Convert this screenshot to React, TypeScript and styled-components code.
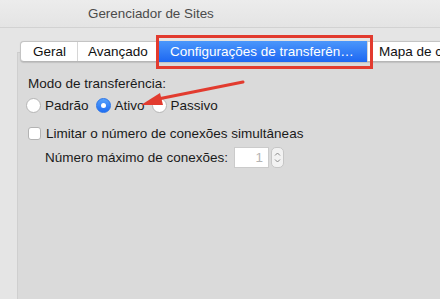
import React from 'react'
import styled, { createGlobalStyle } from 'styled-components'

const GlobalStyle = createGlobalStyle`
  html, body {
    margin: 0;
    padding: 0;
    background: #e5e5e5;
  }
  body {
    font-family: 'Liberation Sans', Arial, sans-serif;
    font-size: 13.5px;
    color: #1a1a1a;
  }
`

const Window = styled.div`
  position: relative;
  width: 440px;
  height: 299px;
  overflow: hidden;
  display: flex;
  flex-direction: column;
  background: #e5e5e5;
`

const TitleBar = styled.div`
  height: 27px;
  flex: none;
  display: flex;
  align-items: center;
  padding-left: 88px;
  background: linear-gradient(#ececec, #e4e4e4);
  border-bottom: 1px solid #d2d2d2;
`

const Title = styled.span`
  color: #4b4b4b;
  font-size: 13.4px;
  white-space: nowrap;
`

const Body = styled.div`
  flex: 1;
  display: flex;
  flex-direction: column;
  padding: 13px 0 0 17px;
`

const TabBar = styled.div`
  position: relative;
  z-index: 1;
  display: flex;
  height: 21px;
  margin: 0 0 -10px 3px;
  width: max-content;
  background: #fff;
  border: 1px solid #c4c4c4;
  border-bottom-color: #b6b6b6;
  border-radius: 4px;
  box-sizing: border-box;
  box-shadow: 0 0.5px 1px rgba(0, 0, 0, 0.12);
`

const Segment = styled.div<{ $width?: number; $pad: number; $selected?: boolean; $marked?: boolean }>`
  position: relative;
  flex: none;
  width: ${({ $width }) => ($width ? `${$width}px` : 'auto')};
  padding: 0 12px 0 ${({ $pad }) => $pad}px;
  display: flex;
  align-items: center;
  white-space: nowrap;
  color: ${({ $selected }) => ($selected ? '#fff' : '#111')};
  background: ${({ $selected }) => ($selected ? 'linear-gradient(#4b97fb, #1d67f2)' : 'transparent')};
  margin: ${({ $selected }) => ($selected ? '-1px 0' : '0')};
  border-left: 1px solid ${({ $selected }) => ($selected ? 'transparent' : '#d6d6d6')};
  box-sizing: border-box;

  &:first-child {
    border-left: none;
  }

  &::after {
    content: '';
    display: ${({ $marked }) => ($marked ? 'block' : 'none')};
    position: absolute;
    top: -6px;
    left: -1px;
    right: -6px;
    bottom: -7px;
    border: 3px solid #e23b2f;
  }
`

const Panel = styled.div`
  flex: 1;
  display: flex;
  flex-direction: column;
  padding: 23px 0 0 10px;
  background: #dadada;
  border-top: 1px solid #cdcdcd;
  border-left: 1px solid #cfcfcf;
`

const Label = styled.div`
  line-height: 16px;
  height: 16px;
  white-space: nowrap;
`

const RadioRow = styled.div`
  display: flex;
  align-items: center;
  height: 16px;
  margin: 5px 0 0 -2px;
`

const RadioItem = styled.label`
  display: flex;
  align-items: center;
  gap: 4px;
  margin-right: 7px;
  white-space: nowrap;
`

const RadioDot = styled.span<{ $checked?: boolean }>`
  width: 15px;
  height: 15px;
  border-radius: 50%;
  box-sizing: border-box;
  display: flex;
  align-items: center;
  justify-content: center;
  background: ${({ $checked }) => ($checked ? 'linear-gradient(#55a0fb, #1f6ef3)' : '#fff')};
  border: 1px solid ${({ $checked }) => ($checked ? '#2a74e8' : '#b5b5b5')};

  &::after {
    content: '';
    display: ${({ $checked }) => ($checked ? 'block' : 'none')};
    width: 5px;
    height: 5px;
    border-radius: 50%;
    background: #fff;
  }
`

const CheckRow = styled.label`
  display: flex;
  align-items: center;
  gap: 5px;
  height: 16px;
  margin-top: 12px;
  white-space: nowrap;
`

const CheckBox = styled.span`
  width: 13px;
  height: 13px;
  box-sizing: border-box;
  border: 1px solid #b3b3b3;
  border-radius: 3px;
  background: #fff;
`

const NumberRow = styled.div`
  display: flex;
  align-items: center;
  margin: 6px 0 0 17px;
  height: 21px;
`

const NumberLabel = styled.span`
  white-space: nowrap;
  margin-right: 6px;
`

const NumberInput = styled.div`
  width: 35px;
  height: 21px;
  box-sizing: border-box;
  border: 1px solid #cbcbcb;
  background: #fff;
  color: #b4b4b4;
  text-align: right;
  padding-right: 5px;
  line-height: 19px;
`

const Stepper = styled.div`
  width: 13px;
  height: 21px;
  margin-left: 2px;
  box-sizing: border-box;
  border: 1px solid #c6c6c6;
  border-radius: 5px;
  background: #f2f2f2;
  display: flex;
  align-items: center;
  justify-content: center;
`

const ArrowLayer = styled.svg`
  position: absolute;
  left: 0;
  top: 0;
  pointer-events: none;
`

const App: React.FC = () => {
  return (
    <Window>
      <GlobalStyle />
      <TitleBar>
        <Title>Gerenciador de Sites</Title>
      </TitleBar>
      <Body>
        <TabBar>
          <Segment $width={56} $pad={12}>Geral</Segment>
          <Segment $width={79} $pad={10}>Avançado</Segment>
          <Segment $width={211} $pad={13} $selected $marked>
            Configurações de transferên…
          </Segment>
          <Segment $pad={11}>Mapa de caracteres</Segment>
        </TabBar>
        <Panel>
          <Label>Modo de transferência:</Label>
          <RadioRow>
            <RadioItem>
              <RadioDot />
              Padrão
            </RadioItem>
            <RadioItem>
              <RadioDot $checked />
              Ativo
            </RadioItem>
            <RadioItem>
              <RadioDot />
              Passivo
            </RadioItem>
          </RadioRow>
          <CheckRow>
            <CheckBox />
            Limitar o número de conexões simultâneas
          </CheckRow>
          <NumberRow>
            <NumberLabel>Número máximo de conexões:</NumberLabel>
            <NumberInput>1</NumberInput>
            <Stepper>
              <svg width="7" height="15" viewBox="0 0 7 15">
                <path d="M1 5.5 L3.5 3 L6 5.5" fill="none" stroke="#8a8a8a" strokeWidth="1" />
                <path d="M1 9.5 L3.5 12 L6 9.5" fill="none" stroke="#8a8a8a" strokeWidth="1" />
              </svg>
            </Stepper>
          </NumberRow>
        </Panel>
      </Body>

      {/* annotation arrow */}
      <ArrowLayer width="440" height="299" viewBox="0 0 440 299">
        <line x1="243" y1="82" x2="158" y2="99" stroke="#e23b2f" strokeWidth="3" strokeLinecap="round" />
        <polygon points="141,105 160,93 163,105" fill="#e23b2f" />
      </ArrowLayer>
    </Window>
  )
}

export default App
